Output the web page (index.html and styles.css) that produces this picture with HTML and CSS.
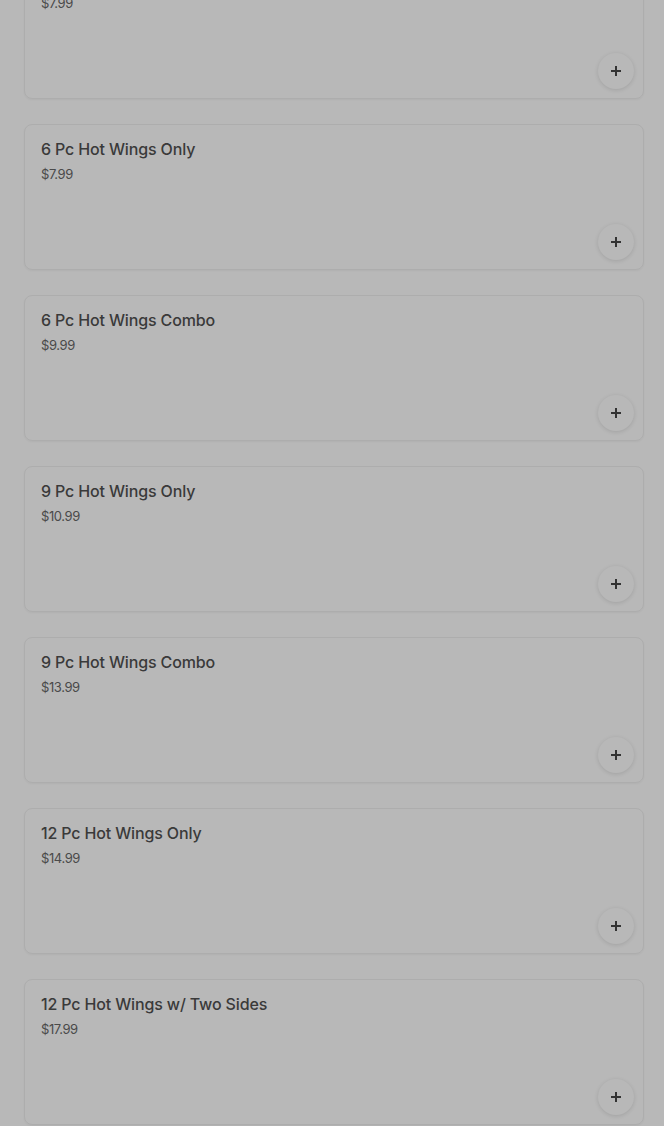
FILE: index.html
```html
<!DOCTYPE html>
<html lang="en">
<head>
    <meta charset="UTF-8">
    <meta name="viewport" content="width=device-width, initial-scale=1.0">
    <title>Hot Wings</title>
    <link rel="stylesheet" href="styles.css">
</head>
<body>
    <div class="menu-list">
        <div class="item-card">
            <p class="item-name">3 Pc Hot Wings Combo</p>
            <p class="item-price">$7.99</p>
            <button class="add-btn" aria-label="Add">
                <svg width="12" height="12" viewBox="0 0 12 12"><path d="M6 1v10M1 6h10" stroke="#333" stroke-width="2"/></svg>
            </button>
        </div>
        <div class="item-card">
            <p class="item-name">6 Pc Hot Wings Only</p>
            <p class="item-price">$7.99</p>
            <button class="add-btn" aria-label="Add">
                <svg width="12" height="12" viewBox="0 0 12 12"><path d="M6 1v10M1 6h10" stroke="#333" stroke-width="2"/></svg>
            </button>
        </div>
        <div class="item-card">
            <p class="item-name">6 Pc Hot Wings Combo</p>
            <p class="item-price">$9.99</p>
            <button class="add-btn" aria-label="Add">
                <svg width="12" height="12" viewBox="0 0 12 12"><path d="M6 1v10M1 6h10" stroke="#333" stroke-width="2"/></svg>
            </button>
        </div>
        <div class="item-card">
            <p class="item-name">9 Pc Hot Wings Only</p>
            <p class="item-price">$10.99</p>
            <button class="add-btn" aria-label="Add">
                <svg width="12" height="12" viewBox="0 0 12 12"><path d="M6 1v10M1 6h10" stroke="#333" stroke-width="2"/></svg>
            </button>
        </div>
        <div class="item-card">
            <p class="item-name">9 Pc Hot Wings Combo</p>
            <p class="item-price">$13.99</p>
            <button class="add-btn" aria-label="Add">
                <svg width="12" height="12" viewBox="0 0 12 12"><path d="M6 1v10M1 6h10" stroke="#333" stroke-width="2"/></svg>
            </button>
        </div>
        <div class="item-card">
            <p class="item-name">12 Pc Hot Wings Only</p>
            <p class="item-price">$14.99</p>
            <button class="add-btn" aria-label="Add">
                <svg width="12" height="12" viewBox="0 0 12 12"><path d="M6 1v10M1 6h10" stroke="#333" stroke-width="2"/></svg>
            </button>
        </div>
        <div class="item-card">
            <p class="item-name">12 Pc Hot Wings w/ Two Sides</p>
            <p class="item-price">$17.99</p>
            <button class="add-btn" aria-label="Add">
                <svg width="12" height="12" viewBox="0 0 12 12"><path d="M6 1v10M1 6h10" stroke="#333" stroke-width="2"/></svg>
            </button>
        </div>
    </div>
</body>
</html>
```

FILE: styles.css
```css
body {
    margin: 0;
    background-color: #b8b8b8;
    font-family: Inter, "Noto Sans", sans-serif;
    height: 1126px;
    overflow: hidden;
}

.menu-list {
    display: flex;
    flex-direction: column;
    gap: 25px;
    margin-top: -47px;
    padding: 0 20px 0 24px;
}

.item-card {
    height: 146px;
    box-sizing: border-box;
    display: flex;
    flex-direction: column;
    padding: 12px 9px 9px 16px;
    border: 1px solid #adadad;
    border-radius: 8px;
    box-shadow: 0 1px 2px rgba(0, 0, 0, 0.04);
}

.item-name {
    margin: 0;
    font-size: 16px;
    line-height: 24px;
    font-weight: 500;
    letter-spacing: -0.15px;
    color: #3a3a3a;
}

.item-price {
    margin: 3px 0 0;
    font-size: 13px;
    line-height: 20px;
    letter-spacing: -0.4px;
    color: #4a4a4a;
}

.add-btn {
    margin-top: auto;
    align-self: flex-end;
    width: 36px;
    height: 36px;
    border: none;
    border-radius: 50%;
    background-color: #b8b8b8;
    box-shadow: 0 1px 4px rgba(0, 0, 0, 0.12);
    display: flex;
    align-items: center;
    justify-content: center;
    padding: 0;
    cursor: pointer;
}
```
